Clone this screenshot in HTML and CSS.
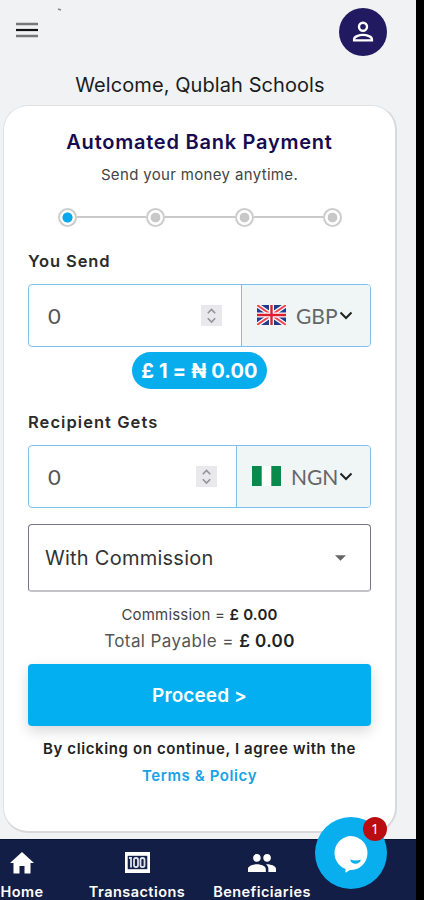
FILE: index.html
```html
<!DOCTYPE html>
<html lang="en">
<head>
<meta charset="utf-8">
<title>Automated Bank Payment</title>
<link rel="stylesheet" href="styles.css">
</head>
<body>
<div class="app">
  <header class="topbar">
    <svg class="menu" viewBox="0 0 22 16"><path d="M0 2h22M0 14h22" stroke="#777" stroke-width="2.6"/><path d="M0 8h22" stroke="#111" stroke-width="2.2"/></svg>
    <svg class="speck" viewBox="0 0 6 4"><path d="M1 1l3 1" stroke="#888" stroke-width="1.5"/></svg>
    <div class="avatar"><svg viewBox="0 0 22 22" fill="none" stroke="#fff" stroke-width="2.4"><circle cx="11" cy="5.8" r="4"/><path d="M2.1 19.4v-1.2c0-2.6 5-4.3 8.9-4.3s8.9 1.700 8.900 4.300v1.200z"/></svg></div>
  </header>
  <h1 class="welcome"><span>Welcome, Qublah Schools</span></h1>
  <main class="card">
    <h2 class="title">Automated Bank Payment</h2>
    <p class="subtitle">Send your money anytime.</p>
    <div class="steps">
      <i class="step active"></i><b class="line"></b><i class="step"></i><b class="line"></b><i class="step"></i><b class="line"></b><i class="step"></i>
    </div>
    <div class="label send">You Send</div>
    <div class="field">
      <div class="amount"><span>0</span><svg class="spin" viewBox="0 0 21 21"><path d="M6.8 8.2l3.7-3.7 3.7 3.7M6.8 13.3l3.7 3.7 3.7-3.7"/></svg></div>
      <div class="currency gbp">
        <svg class="flag" viewBox="0 0 29 20"><path fill="#223b91" d="M0 0h29v20H0z"/><path d="M0 0l29 20M29 0L0 20" stroke="#fff" stroke-width="4.6"/><path d="M0 0l29 20M29 0L0 20" stroke="#ee4855" stroke-width="2"/><path d="M14.5 0v20M0 10h29" stroke="#fff" stroke-width="5"/><path d="M14.5 0v20M0 10h29" stroke="#d9202f" stroke-width="2.400"/></svg>
        <span>GBP</span><svg class="chev" viewBox="0 0 14 9"><path d="M1.500 1.500L7 7l5.500-5.500"/></svg>
      </div>
    </div>
    <div class="rate"><span>£ 1 = ₦ 0.00</span></div>
    <div class="label gets">Recipient Gets</div>
    <div class="field">
      <div class="amount"><span>0</span><svg class="spin" viewBox="0 0 21 21"><path d="M6.800 8.200l3.700-3.700 3.700 3.700M6.800 13.300l3.700 3.700 3.700-3.700"/></svg></div>
      <div class="currency ngn">
        <svg class="flag" viewBox="0 0 29 20"><path fill="#fff" d="M0 0h29v20H0z"/><path fill="#078a4b" d="M0 0h9.700v20H0zM19.300 0H29v20h-9.700z"/></svg>
        <span>NGN</span><svg class="chev" viewBox="0 0 14 9"><path d="M1.500 1.500L7 7l5.500-5.500"/></svg>
      </div>
    </div>
    <div class="select"><span>With Commission</span><svg viewBox="0 0 12 6"><path d="M0 0h12L6 6z" fill="#666"/></svg></div>
    <p class="commission">Commission = <strong>£ 0.00</strong></p>
    <p class="total">Total Payable = <strong>£ 0.00</strong></p>
    <button class="proceed">Proceed &gt;</button>
    <p class="agree">By clicking on continue, I agree with the</p>
    <p class="terms">Terms &amp; Policy</p>
  </main>
  <nav class="nav">
    <div class="item home"><svg viewBox="0 0 24 22"><path fill="#fff" d="M12 0L0 11h3.500v10.500h6V14h5v7.500h6V11H24z"/></svg><span>Home</span></div>
    <div class="item trans"><svg viewBox="0 0 25 21"><path fill="#fff" d="M0 0h25v21H0z"/><path fill="#15204a" d="M2.700 3.800h19.600v13.400H2.700z"/><g fill="none" stroke="#dfe1e8" stroke-width="1.800"><path d="M4 6h2v9.500"/><rect x="9" y="6" width="4" height="9" rx="1.800"/><rect x="15.500" y="6" width="4" height="9" rx="1.800"/></g></svg><span>Transactions</span></div>
    <div class="item bene"><svg viewBox="1 5 22 14"><path fill="#fff" d="M16 11c1.660 0 2.990-1.340 2.990-3S17.660 5 16 5s-3 1.340-3 3 1.340 3 3 3zm-8 0c1.660 0 2.990-1.340 2.990-3S9.660 5 8 5 5 6.340 5 8s1.340 3 3 3zm0 2c-2.330 0-7 1.170-7 3.500V19h14v-2.500C15 14.170 10.330 13 8 13zm8 0c-.290 0-.620.020-.970.050 1.160.840 1.970 1.970 1.970 3.450V19h6v-2.500c0-2.330-4.670-3.500-7-3.500z"/></svg><span>Beneficiaries</span></div>
  </nav>
  <div class="chat"><svg viewBox="0 0 36 38"><path fill="#fff" d="M18 1a17 17 0 1 1-1 34l-4.500 2.700v-3.800A17 17 0 0 1 18 1z"/><path fill="#08aeee" d="M17 24.500q5 2 11 .300-1.500 4-5.500 4t-5.500-4.300z"/></svg><span class="badge">1</span></div>
</div>
</body>
</html>
```
FILE: styles.css
```css
* { box-sizing: border-box; margin: 0; padding: 0; }
body { width: 424px; height: 900px; overflow: hidden; background: #000; font-family: Inter, "Noto Sans", sans-serif; color: #222; }
.app { position: relative; width: 416px; height: 900px; background: #f0f2f4; display: flex; flex-direction: column; }
.topbar { height: 70px; display: flex; align-items: flex-start; padding: 8px 29px 0 16px; }
.menu { width: 22px; height: 16px; margin-top: 14px; }
.speck { width: 6px; height: 4px; margin-left: 19px; }
.avatar { width: 48px; height: 48px; border-radius: 50%; background: #211a60; margin-left: auto; display: flex; align-items: center; justify-content: center; }
.avatar svg { width: 22px; height: 22px; }
.welcome { height: 35px; line-height: 31px; font-size: 20px; font-weight: 400; text-align: center; width: 400px; letter-spacing: .08px; white-space: nowrap; color: #1c1c1c; }
.card { width: 394px; height: 728px; margin-left: 3px; flex: none; background: #fff; border: 1px solid #e0e1e2; border-right: 2px solid #d8d9da; border-bottom: 2px solid #d8d9da; border-radius: 25px; padding: 20px 24px 0; display: flex; flex-direction: column; text-align: center; white-space: nowrap; }
.title { height: 30px; line-height: 32px; font-size: 20px; font-weight: 600; color: #170b50; letter-spacing: .76px; }
.subtitle { height: 20px; line-height: 22px; margin-top: 8px; font-size: 15px; letter-spacing: .34px; color: #444; }
.steps { display: flex; align-items: center; height: 20px; margin: 23px 29px 0 30px; }
.step { flex: none; width: 19px; height: 19px; border-radius: 50%; border: 2px solid #ccc; background: radial-gradient(circle, #c8c8c8 4.5px, #fff 5.2px); }
.step.active { background: radial-gradient(circle, #08a8ee 4.700px, #fff 5.400px); }
.line { flex: 1; height: 2px; background: #c9c9c9; }
.label { height: 20px; line-height: 20px; text-align: left; font-size: 16.5px; font-weight: 600; letter-spacing: 1.05px; color: #2b2b2b; }
.send { margin-top: 24px; }
.send { letter-spacing: .9px; }
.gets { margin-top: 23px; }
.field { height: 63px; margin-top: 13px; border: 1.500px solid #7bc1ea; border-radius: 4px; display: flex; overflow: hidden; flex: none; }
.amount { flex: 1; display: flex; align-items: center; justify-content: space-between; padding: 0 19px 1px; font-size: 22px; color: #555; font-family: Lato, sans-serif; }
.spin { width: 21px; height: 21px; background: #e9e9ed; }
.spin path { fill: none; stroke: #929297; stroke-width: 1.600; }
.currency { background: #f0f5f6; border-left: 1.500px solid #7bc1ea; display: flex; align-items: center; padding: 0 17px 1px 15px; font-family: Lato, sans-serif; font-size: 21px; color: #666; }
.gbp { width: 129px; }
.ngn { width: 134px; }
.flag { width: 29px; height: 20px; flex: none; }
.currency span { margin-left: 10px; }
.chev { width: 14px; height: 9px; margin-left: auto; flex: none; }
.chev path { fill: none; stroke: #222; stroke-width: 2; }
.rate { margin: 5px auto 0; width: 135px; height: 37px; line-height: 38px; border-radius: 19px; background: #08adee; color: #fff; font-weight: 700; font-size: 20px; letter-spacing: .12px; }
.select { height: 68px; flex: none; margin-top: 16px; border: 1px solid #77738d; border-bottom: 2px solid #c2c2c7; border-radius: 4px; display: flex; align-items: center; justify-content: space-between; padding: 1px 24px 0 16px; font-size: 20px; letter-spacing: .25px; color: #333; }
.select svg { width: 11px; height: 6px; }
.commission, .total, .agree, .terms { height: 20px; line-height: 21px; }
.commission { margin-top: 12px; font-size: 15px; letter-spacing: .2px; color: #444; }
.total { margin-top: 7px; font-size: 17px; letter-spacing: .42px; color: #555; }
strong { color: #222; font-weight: 600; }
.proceed { margin-top: 13px; height: 62px; flex: none; border: 0; border-radius: 4px; background: #03aff0; color: #fff; font: 600 19px Inter, sans-serif; letter-spacing: .1px; box-shadow: 0 5px 14px rgba(0,0,0,.16); }
.agree { margin-top: 12px; font-size: 15px; line-height: 22px; font-weight: 600; letter-spacing: .62px; }
.terms { margin-top: 7px; font-size: 15px; line-height: 22px; font-weight: 600; letter-spacing: .6px; color: #17a2e6; }
.nav { flex: none; margin-top: 6px; height: 61px; width: 416px; background: #121e45; display: flex; overflow: hidden; color: #fff; border-top: 1px solid #0a1534; }
.item { flex: none; display: flex; flex-direction: column; align-items: center; font-size: 14.5px; font-weight: 600; line-height: 18px; white-space: nowrap; padding-top: 12px; letter-spacing: .45px; }
.item span { margin-top: auto; margin-bottom: -1px; }
.home { width: 44px; }
.trans { width: 96px; margin-left: 45px; }
.bene { width: 98px; margin-left: 28px; }
.home svg { width: 24px; height: 22px; }
.trans svg { width: 25px; height: 21px; }
.bene svg { width: 28px; height: 18px; margin-top: 2px; }
.chat { position: absolute; left: 315px; top: 817px; width: 72px; height: 72px; border-radius: 50%; background: #08aeee; }
.chat svg { position: absolute; left: 18px; top: 18px; width: 36px; height: 38px; }
.badge { position: absolute; left: 48px; top: 0; width: 24px; height: 24px; border-radius: 50%; background: #b90d12; color: #fff; font: 14px/24px "Noto Sans", sans-serif; text-align: center; }
```
